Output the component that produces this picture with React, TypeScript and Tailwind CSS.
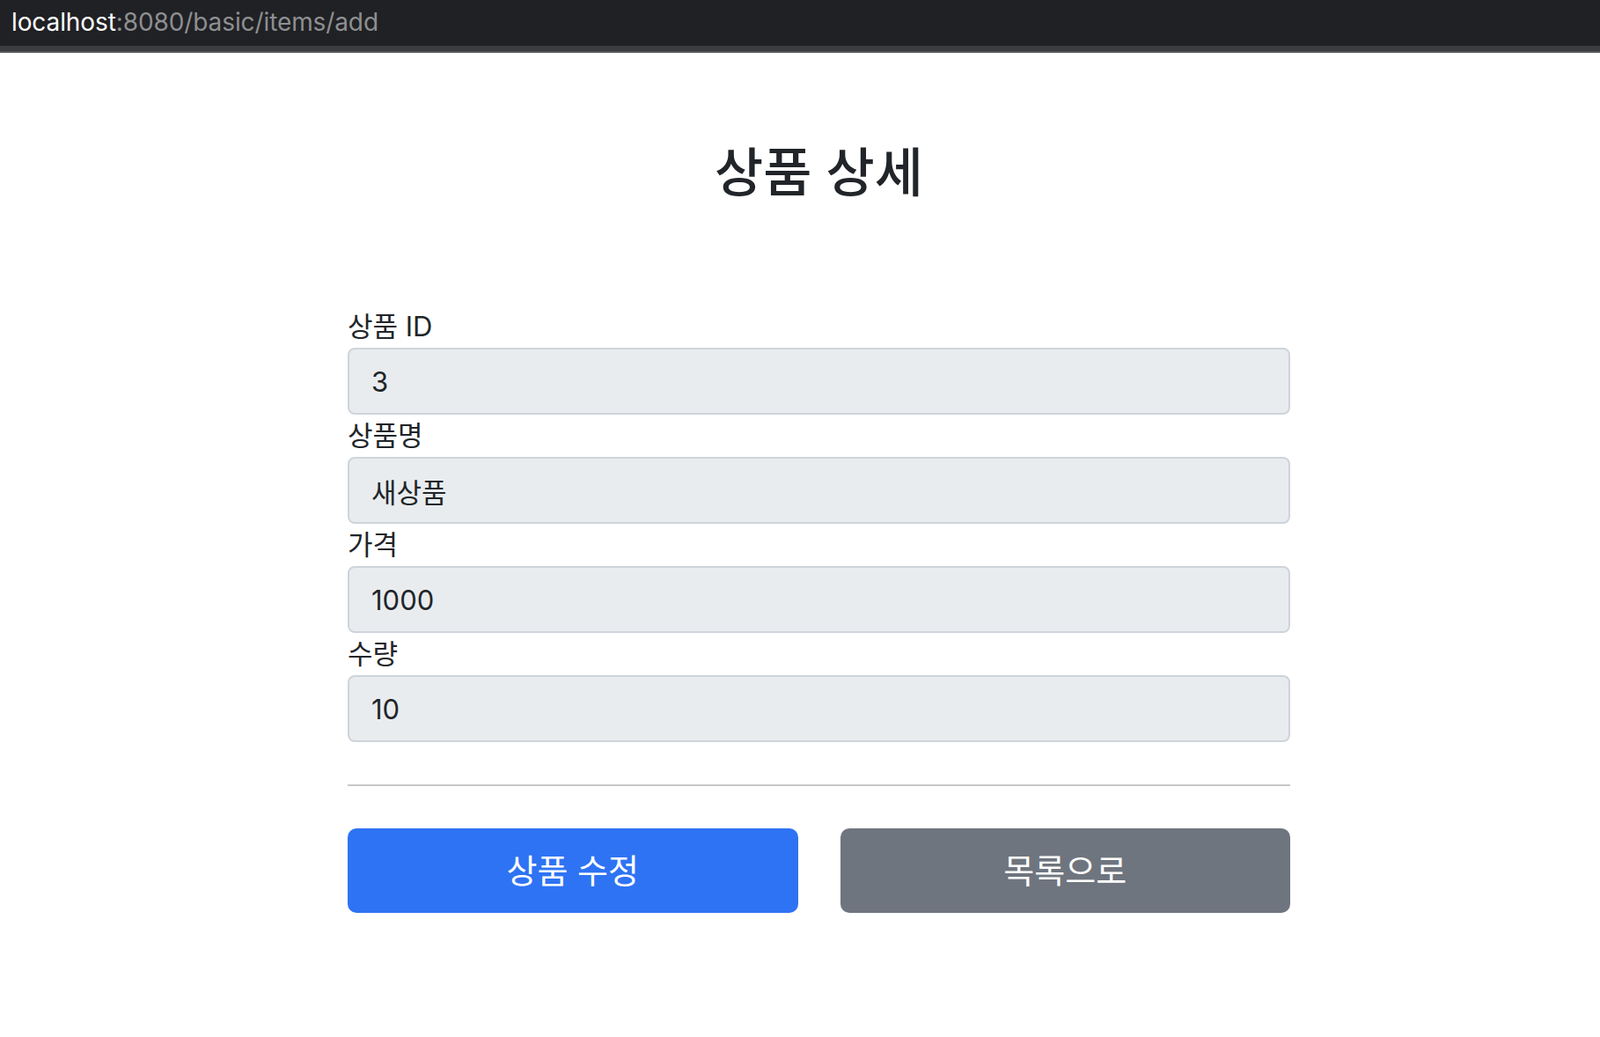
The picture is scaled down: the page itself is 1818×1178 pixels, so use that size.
const fields = [
  { label: "상품 ID", value: "3" },
  { label: "상품명", value: "새상품" },
  { label: "가격", value: "1000" },
  { label: "수량", value: "10" },
];

const font = "font-['Inter','Noto_Sans_CJK_KR',sans-serif]";

export default function App() {
  return (
    <div className={`min-h-screen bg-white text-[#212529] ${font}`}>
      {/* Address bar */}
      <div className="h-[52px] bg-[#202124] flex items-center pl-[13px] pb-[3px]">
        <span className="text-[28px] tracking-[-0.1px] leading-none">
          <span className="text-white">localhost</span>
          <span className="text-[#8e8f92]">:8080/basic/items/add</span>
        </span>
      </div>
      <div className="h-[8px] bg-[#3b3c3f] border-b-2 border-[#55565a]" />

      {/* Page */}
      <div className="pl-[395px]">
        <div className="w-[1071px]">
          <div className="pt-[98px] pb-[112px] text-center">
            <h2 className="text-[60px] leading-[77px] font-medium">상품 상세</h2>
          </div>

          <form onSubmit={(e) => e.preventDefault()}>
            {fields.map((f) => (
              <div key={f.label}>
                <label className="block text-[31px] leading-[48px]">{f.label}</label>
                <input
                  readOnly
                  value={f.value}
                  className="block w-full h-[76px] px-[25px] text-[31px] text-[#212529] bg-[#e9ecef] border-2 border-[#ced4da] rounded-[8px] outline-none"
                />
              </div>
            ))}

            <hr className="mt-[48px] mb-[48px] border-0 border-t-2 border-[#c8c8c8]" />

            <div className="grid grid-cols-2 gap-[48px]">
              <button
                type="button"
                className="h-[96px] rounded-[10px] bg-[#2e73f3] text-white text-[38px]"
              >
                상품 수정
              </button>
              <button
                type="button"
                className="h-[96px] rounded-[10px] bg-[#6f757e] text-white text-[38px]"
              >
                목록으로
              </button>
            </div>
          </form>
        </div>
      </div>
    </div>
  );
}
